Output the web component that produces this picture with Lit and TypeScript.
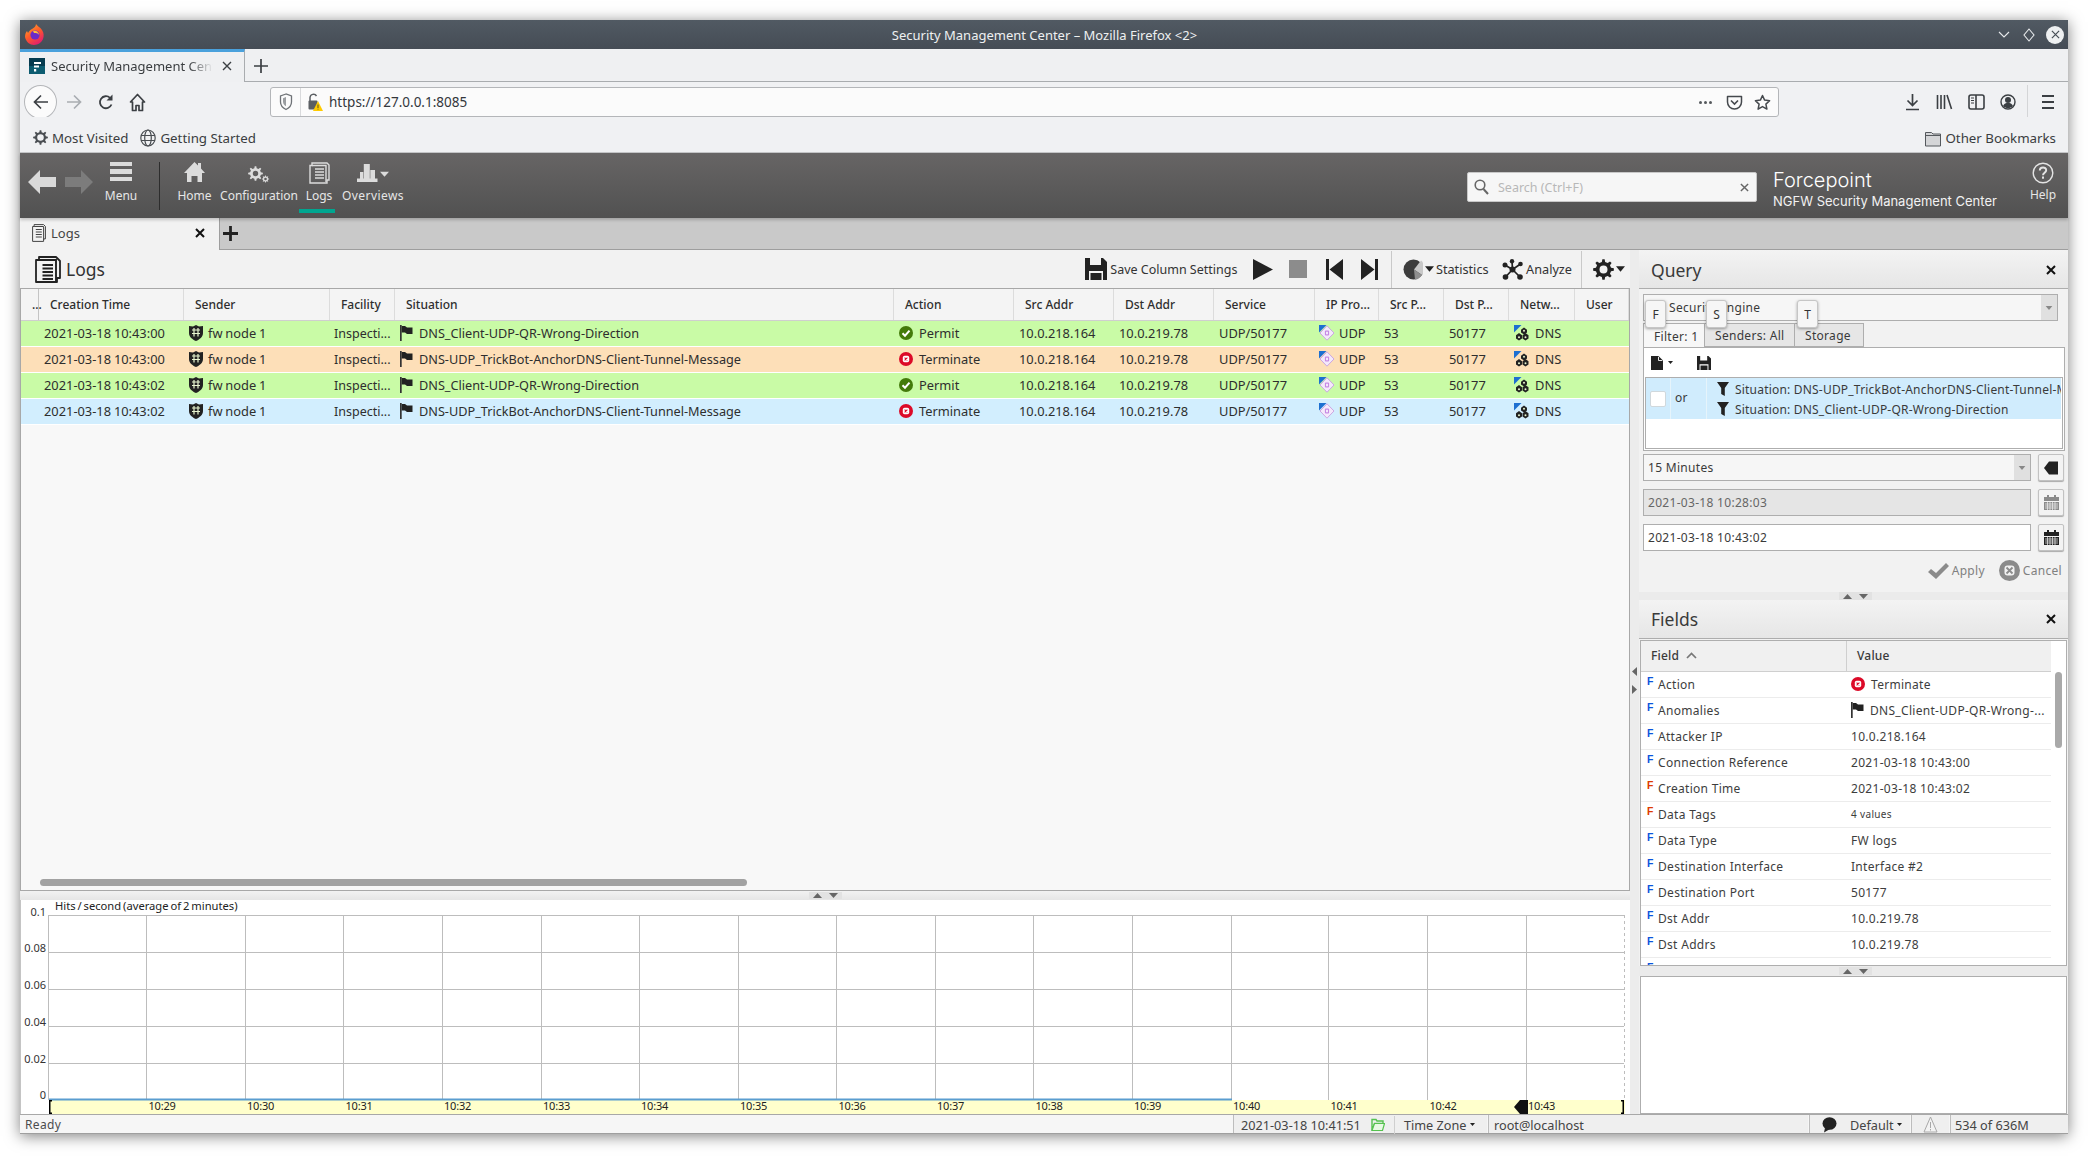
import { LitElement, html, css, svg } from "lit";
import { customElement } from "lit/decorators.js";

const gear = (cx: number, cy: number, r: number, n: number, hole: number) => {
  const pts: string[] = [];
  for (let i = 0; i < n; i++) {
    const a = (i * 2 * Math.PI) / n;
    const d = Math.PI / n;
    [[-0.55, r * 0.74], [-0.28, r], [0.28, r], [0.55, r * 0.74]].forEach(([k, rr]) => {
      const t = a + k * d * 1.0;
      pts.push(`${(cx + rr * Math.cos(t)).toFixed(2)} ${(cy + rr * Math.sin(t)).toFixed(2)}`);
    });
  }
  const h = `M${cx - hole} ${cy}a${hole} ${hole} 0 1 0 ${2 * hole} 0a${hole} ${hole} 0 1 0 ${-2 * hole} 0z`;
  return `M${pts.join("L")}z${h}`;
};

const ic = {
  firefox: html`<svg width="19" height="21" viewBox="0 0 19 21"><defs><linearGradient id="ff" x1="0" y1="0" x2="0.6" y2="1"><stop offset="0" stop-color="#ffb02e"/><stop offset=".55" stop-color="#ff5a2a"/><stop offset="1" stop-color="#e3206a"/></linearGradient></defs><path d="M11 0c1 2 4 3 6 6 2 3 2 6 1 9-1 3-5 6-9 6-4 0-8-3-9-8C0 10 1 8 2 7l1 2c1-2 2-3 4-4 2-1 4-3 4-5z" fill="url(#ff)"/><circle cx="10" cy="11" r="4.6" fill="#6a2bc9"/><path d="M8 7c3-1 6 1 6 4-1-2-3-2-5-2z" fill="#ffbd3a"/></svg>`,
  favicon: html`<svg width="16" height="16" viewBox="0 0 16 16"><rect width="16" height="16" fill="#063b4f"/><rect x="0" y="8" width="16" height="8" fill="#0d5c70"/><path d="M5 4h7v2H5zM5 7.5h5v2H5zM5 11h2.2v2.5H5z" fill="#fff"/></svg>`,
  back: html`<svg width="18" height="18" viewBox="0 0 18 18"><path d="M16 9H3M9 2.5 2.5 9 9 15.500" fill="none" stroke="#3b3f43" stroke-width="1.700"/></svg>`,
  fwd: html`<svg width="18" height="18" viewBox="0 0 18 18"><path d="M2 9h13M9 2.500 15.500 9 9 15.500" fill="none" stroke="#a9adb1" stroke-width="1.700"/></svg>`,
  reload: html`<svg width="16" height="18" viewBox="0 0 16 18"><path d="M13.500 11.500A6 6 0 1 1 12 4.800" fill="none" stroke="#3b3f43" stroke-width="1.800"/><path d="M14.500 1.500v6h-6z" fill="#3b3f43"/></svg>`,
  home: html`<svg width="17" height="19" viewBox="0 0 17 19"><path d="M8.500 1.500 1.500 9h2v8.500h3.500v-5h3v5h3.500V9h2z" fill="none" stroke="#3b3f43" stroke-width="1.700" stroke-linejoin="round"/></svg>`,
  shieldFf: html`<svg width="14" height="18" viewBox="0 0 14 18"><path d="M7 1 1.500 3v6c0 3.500 2.500 6 5.500 7.500 3-1.500 5.500-4 5.500-7.500V3z" fill="none" stroke="#6f7377" stroke-width="1.300"/><path d="M7 4 4 5.200v3.500C4 11 5.500 12.500 7 13.300z" fill="#9a9da0"/></svg>`,
  lock: html`<svg width="15" height="20" viewBox="0 0 15 20"><path d="M2 9V5.500a3.500 3.500 0 0 1 6.500-1.500" fill="none" stroke="#5b5f63" stroke-width="1.500"/><rect x="0.500" y="8.500" width="9" height="9" rx="1" fill="#5b5f63"/><path d="M10 9l5 10H5z" fill="#ffcb00"/><path d="M9.600 12.500h.8v3.500h-.8zM9.600 16.800h.8v.8h-.8z" fill="#333"/></svg>`,
  pocket: html`<svg width="17" height="17" viewBox="0 0 17 17"><path d="M1.500 2.500h14v5.500a7 7 0 0 1-14 0z" fill="none" stroke="#45494d" stroke-width="1.500" stroke-linejoin="round"/><path d="M5 6.500l3.500 3.500L12 6.500" fill="none" stroke="#45494d" stroke-width="1.600"/></svg>`,
  star: html`<svg width="17" height="17" viewBox="0 0 17 17"><path d="M8.500 1.500l2.100 4.600 5 .6-3.700 3.400 1 5-4.400-2.500-4.400 2.500 1-5L1.400 6.700l5-.6z" fill="none" stroke="#45494d" stroke-width="1.500" stroke-linejoin="round"/></svg>`,
  download: html`<svg width="15" height="18" viewBox="0 0 15 18"><path d="M7.500 1v11M2.500 7.500l5 5 5-5M1 16.500h13" fill="none" stroke="#3b3f43" stroke-width="1.700"/></svg>`,
  library: html`<svg width="17" height="16" viewBox="0 0 17 16"><path d="M1.500 1v14M5 1v14M8.500 1v14M11 1l4.500 14" fill="none" stroke="#3b3f43" stroke-width="1.600"/></svg>`,
  sidebar: html`<svg width="17" height="16" viewBox="0 0 17 16"><rect x="1" y="1" width="15" height="14" rx="2" fill="none" stroke="#3b3f43" stroke-width="1.600"/><path d="M8 1v14" stroke="#3b3f43" stroke-width="1.600"/><path d="M3 4h3M3 6.500h3M3 9h3" stroke="#3b3f43" stroke-width="1.200"/></svg>`,
  account: html`<svg width="16" height="18" viewBox="0 0 16 18"><circle cx="8" cy="9" r="7" fill="none" stroke="#3b3f43" stroke-width="1.400"/><circle cx="8" cy="7" r="3" fill="#3b3f43"/><path d="M3 13c1-2.500 3-3 5-3s4 .5 5 3c-1.500 1.500-3 2-5 2s-3.500-.5-5-2z" fill="#3b3f43"/></svg>`,
  menuFf: html`<svg width="14" height="16" viewBox="0 0 14 16"><path d="M1 2h12M1 8h12M1 14h12" stroke="#3b3f43" stroke-width="1.800"/></svg>`,
  mostVisited: html`<svg width="15" height="15" viewBox="0 0 15 15"><path fill="#4a4e52" fill-rule="evenodd" d="${gear(7.5, 7.5, 7.4, 8, 3.3)}"/></svg>`,
  globe: html`<svg width="16" height="18" viewBox="0 0 16 18"><g fill="none" stroke="#4a4e52" stroke-width="1.200"><ellipse cx="8" cy="9" rx="7.200" ry="8"/><ellipse cx="8" cy="9" rx="3.300" ry="8"/><path d="M1 6.500h14M1 11.500h14"/></g></svg>`,
  folderFf: html`<svg width="16" height="18" viewBox="0 0 16 18"><path d="M.500 3.500h6l1.500 1.500h7.500v12H.500z" fill="#d4d5d7" stroke="#55595d"/><path d="M.500 6.500h15" stroke="#55595d"/></svg>`,
  arrowL: (c: string) => html`<svg width="28" height="24" viewBox="0 0 28 24"><path d="M0 12 12 0v7h16v10H12v7z" fill="${c}"/></svg>`,
  arrowR: (c: string) => html`<svg width="28" height="24" viewBox="0 0 28 24"><path d="M28 12 16 0v7H0v10h16v7z" fill="${c}"/></svg>`,
  burger: html`<svg width="22" height="19" viewBox="0 0 22 19"><path d="M0 0h22v4H0zM0 7h22v5H0zM0 15h22v4H0z" fill="#dcdcdc"/></svg>`,
  homeApp: html`<svg width="21" height="20" viewBox="0 0 21 20"><path d="M10.500 0 14 3.500V1h3v5.500l4 4.500h-3v9h-4.500v-6h-6v6H3v-9H0z" fill="#dcdcdc"/></svg>`,
  config: html`<svg width="22" height="17" viewBox="0 0 22 17" style="margin-top:4px"><path fill="#dcdcdc" fill-rule="evenodd" d="${gear(7.5, 7.5, 7.4, 8, 2.7)}"/><path fill="#dcdcdc" fill-rule="evenodd" d="${gear(17.5, 13, 3.6, 8, 1.300)}"/></svg>`,
  logsLight: html`<svg width="21" height="22" viewBox="0 0 21 22"><path d="M1 3.500h2V1h15l2 2v15h-2v3H1z" fill="none" stroke="#dcdcdc" stroke-width="1.400"/><path d="M3 3.500h14V20M6 7h9M6 10h9M6 13h9M6 16h9" fill="none" stroke="#dcdcdc" stroke-width="1.400"/></svg>`,
  overviews: html`<svg width="32" height="18" viewBox="0 0 32 18" style="margin-top:2px"><path d="M0 14.500h20.500V18H0zM3 8h3.300v7H3zM6.800 0h6v15h-6zM13.300 6h4.700v9h-4.700z" fill="#dcdcdc"/><path d="M23 7.700h9l-4.500 5z" fill="#dcdcdc"/></svg>`,
  search: html`<svg width="15" height="16" viewBox="0 0 15 16"><circle cx="6" cy="6" r="4.800" fill="none" stroke="#666" stroke-width="1.600"/><path d="M9.500 10l4.500 5" stroke="#666" stroke-width="2"/></svg>`,
  x: (s: number, c: string, w = 2) => html`<svg width="${s}" height="${s}" viewBox="0 0 10 10"><path d="M1 1l8 8M9 1l-8 8" stroke="${c}" stroke-width="${w}" fill="none"/></svg>`,
  plus: (s: number, c: string, w: number) => html`<svg width="${s}" height="${s}" viewBox="0 0 14 14"><path d="M7 0v14M0 7h14" stroke="${c}" stroke-width="${w}"/></svg>`,
  help: html`<svg width="22" height="22" viewBox="0 0 22 22"><circle cx="11" cy="11" r="9.800" fill="none" stroke="#e4e4e4" stroke-width="1.400"/><path d="M7.800 8.500c0-4 6.400-4 6.400-.3 0 2.500-3.200 2.500-3.200 5" fill="none" stroke="#e4e4e4" stroke-width="1.900"/><rect x="10" y="14.500" width="2" height="2.200" fill="#e4e4e4"/></svg>`,
  logsDark: (s: number, h: number) => html`<svg width="${s}" height="${h}" viewBox="0 0 26 27"><path d="M1 4h3V1h17l4 4v17h-3v4H1z" fill="none" stroke="#222" stroke-width="1.800" stroke-linejoin="round"/><path d="M4 4h17v22M7.500 9H18M7.500 12.500H18M7.500 16H18M7.500 19.500H18M7.500 23H18" fill="none" stroke="#222" stroke-width="1.900"/></svg>`,
  logsTab: html`<svg width="14" height="18" viewBox="0 0 14 18"><path d="M.600 2.500h1.500V.600h9.500l1.800 1.800v12.500h-1.800v2.500H.600z" fill="none" stroke="#444" stroke-width="1"/><path d="M2.100 2.500h9.500v13M3.800 5.500h6M3.800 8h6M3.800 10.500h6M3.800 13h6" fill="none" stroke="#444" stroke-width="1"/></svg>`,
  save: (w: number, h: number) => html`<svg width="${w}" height="${h}" viewBox="0 0 22 22"><path fill="#222" fill-rule="evenodd" d="M0 0h18l4 4v18H18V13H4v9H0zM5 0v7h11V0zM5.500 15h11v7h-11z"/></svg>`,
  play: html`<svg width="20" height="21" viewBox="0 0 20 21"><path d="M0 0l20 10.500L0 21z" fill="#222"/></svg>`,
  first: html`<svg width="17" height="21" viewBox="0 0 17 21"><path d="M0 0h3v21H0zM17 0v21L3.500 10.500z" fill="#222"/></svg>`,
  last: html`<svg width="17" height="21" viewBox="0 0 17 21"><path d="M17 0h-3v21h3zM0 0v21l13.500-10.500z" fill="#222"/></svg>`,
  stats: html`<svg width="20" height="21" viewBox="0 0 20 21"><circle cx="10.500" cy="10.500" r="10" fill="#3c3c3c"/><path d="M11 10.500 18 1.500A10 10 0 0 1 19 16z" fill="#c8c8c8"/><path d="M11 10.500 19 16a10 10 0 0 1-7 4.800z" fill="#8f8f8f"/></svg>`,
  tri: (w: number, h: number, c = "#222") => html`<svg width="${w}" height="${h}" viewBox="0 0 10 6"><path d="M0 0h10L5 6z" fill="${c}"/></svg>`,
  analyze: html`<svg width="21" height="21" viewBox="0 0 21 21"><path d="M10.500 10.500 3 6M10.500 10.500 18.500 5M10.500 10.500 3.500 18M10.500 10.500 18 18M10.500 10.500 10 2" stroke="#222" stroke-width="1.700"/><circle cx="10" cy="2.200" r="2.200" fill="#222"/><circle cx="3" cy="6" r="2.500" fill="#222"/><circle cx="18.500" cy="5" r="2.300" fill="#222"/><circle cx="10.500" cy="10.500" r="3" fill="#222"/><circle cx="3.500" cy="18" r="2.800" fill="#222"/><circle cx="18" cy="18" r="2.800" fill="#222"/></svg>`,
  gearDark: html`<svg width="21" height="21" viewBox="0 0 21 21"><path fill="#222" fill-rule="evenodd" d="${gear(10.5, 10.5, 10.4, 8, 4)}"/></svg>`,
  fwshield: html`<svg width="14" height="16" viewBox="0 0 14 16"><path d="M7 0 10 1.500 14 1v7c0 4-3.500 6.500-7 8-3.500-1.500-7-4-7-8V1l4 .5z" fill="#222"/><path d="M3 5h8M3 8.500h8M5 3v8.500M9 3v8.500" stroke="#e8f5d0" stroke-width="1.200"/></svg>`,
  flag: html`<svg width="13" height="16" viewBox="0 0 13 16"><path d="M0 0h1.700v16H0z" fill="#333"/><path d="M1.700 1h3.300l2 1.500h5.500v6.500H7L5 7.500H1.700z" fill="#222"/></svg>`,
  ok: html`<svg width="14" height="14" viewBox="0 0 14 14"><circle cx="7" cy="7" r="7" fill="#437a0a"/><path d="M3.500 7.200l2.500 2.500 4.500-5" fill="none" stroke="#fff" stroke-width="2"/></svg>`,
  term: html`<svg width="14" height="14" viewBox="0 0 14 14"><circle cx="7" cy="7" r="7" fill="#dc0a28"/><rect x="3.800" y="3.800" width="6.400" height="6.400" rx="1.800" fill="#fff"/><path d="M5.600 5.600l2.800 2.800M8.400 5.600l-2.800 2.800" stroke="#dc0a28" stroke-width="1.100"/></svg>`,
  proto: html`<svg width="16" height="16" viewBox="0 0 16 16"><path d="M8 .800 15 8l-7 7.200L1 8z" fill="#f4e9fb" stroke="#cba6e2" stroke-width="1"/><rect x="5.900" y="5.500" width="4.200" height="5" rx="1" fill="#c78ae4"/><path d="M7 6.800h2v2.400H7z" fill="#f4e9fb"/><path d="M0 0h7.500L0 7.500z" fill="#1d6fd1"/></svg>`,
  net: html`<svg width="16" height="16" viewBox="0 0 16 16"><path d="M0 0h7.500L0 7.500z" fill="#1d6fd1"/><g fill="#222"><path d="M10 2.500l3 2.200v2.800l-3 2-3-2V4.700z"/><path d="M5 8l3 2.200v3.300L5 15.500l-3-2v-3.300z"/><path d="M11.500 8l3 2.200v3.300l-3 2-3-2v-3.300z"/></g><g fill="#e8f5d0"><circle cx="10" cy="5.800" r="1"/><circle cx="5" cy="12.200" r="1"/><circle cx="11.500" cy="12.200" r="1"/></g></svg>`,
  newFile: html`<svg width="12" height="14" viewBox="0 0 12 14"><path d="M0 0h7.500l4.500 4.500V14H0z" fill="#222"/><path d="M7.500 .8v3.700h3.700" fill="none" stroke="#fff" stroke-width=".9"/></svg>`,
  funnel: html`<svg width="12" height="14" viewBox="0 0 12 14"><path d="M0 0h12L7.800 6v8L4.200 12V6z" fill="#222"/></svg>`,
  leftArr: html`<svg width="14" height="14" viewBox="0 0 14 14"><path d="M0 7l5-6.500h9v13H5z" fill="#222"/></svg>`,
  cal: (c: string) => html`<svg width="15" height="15" viewBox="0 0 15 15"><path d="M0 2h3V0h2v2h5V0h2v2h3v4H0z" fill="${c}"/><path fill="${c}" d="M0 7h15v8H0z"/><path d="M1 9h13M1 11h13M1 13h13M3.500 7v8M6 7v8M8.500 7v8M11 7v8" stroke="#f0f0f0" stroke-width=".7"/></svg>`,
  check: html`<svg width="21" height="16" viewBox="0 0 21 16"><path d="M0 9l3-3 5 4L18 0l3 3L8 16z" fill="#8b8b8b"/></svg>`,
  cancel: html`<svg width="21" height="21" viewBox="0 0 21 21"><circle cx="10.500" cy="10.500" r="10.500" fill="#8b8b8b"/><rect x="5.500" y="5.500" width="10" height="10" rx="3" fill="#f2f2f2"/><path d="M7.500 7.500l6 6M13.500 7.500l-6 6" stroke="#8b8b8b" stroke-width="1.800"/></svg>`,
  folderGreen: html`<svg width="14" height="14" viewBox="0 0 14 14"><path d="M1 3V1.500h4l1 1.500h6v2.500H3.500L1 12.500z" fill="none" stroke="#55c24f" stroke-width="1.400"/><path d="M3.500 5.500H13.500l-2 7H1z" fill="#e8f9e4" stroke="#55c24f" stroke-width="1.200"/></svg>`,
  bubble: html`<svg width="15" height="16" viewBox="0 0 15 16"><ellipse cx="7.500" cy="6.500" rx="7" ry="6.300" fill="#222"/><path d="M3 11l-1 4.500L8 12z" fill="#222"/></svg>`,
  warn: html`<svg width="15" height="17" viewBox="0 0 15 17"><path d="M7.500 1 14 16H1z" fill="#f3f3f3" stroke="#a8a8a8"/><path d="M7 6h1v6H7zM7 13h1v1.500H7z" fill="#a8a8a8"/></svg>`,
  up: html`<svg width="9" height="5" viewBox="0 0 9 5"><path d="M0 5 4.500 0 9 5z" fill="#666"/></svg>`,
  down: html`<svg width="9" height="5" viewBox="0 0 9 5"><path d="M0 0h9L4.500 5z" fill="#666"/></svg>`,
  chevUp: html`<svg width="11" height="7" viewBox="0 0 11 7"><path d="M1 6l4.500-4.500L10 6" fill="none" stroke="#777" stroke-width="1.700"/></svg>`,
};

const HEAD = ["...", "Creation Time", "Sender", "Facility", "Situation", "Action", "Src Addr", "Dst Addr", "Service", "IP Pro...", "Src P...", "Dst P...", "Netw...", "User"];
const ROWS = [
  { t: "2021-03-18 10:43:00", s: "DNS_Client-UDP-QR-Wrong-Direction", a: "Permit", c: "g" },
  { t: "2021-03-18 10:43:00", s: "DNS-UDP_TrickBot-AnchorDNS-Client-Tunnel-Message", a: "Terminate", c: "o" },
  { t: "2021-03-18 10:43:02", s: "DNS_Client-UDP-QR-Wrong-Direction", a: "Permit", c: "g" },
  { t: "2021-03-18 10:43:02", s: "DNS-UDP_TrickBot-AnchorDNS-Client-Tunnel-Message", a: "Terminate", c: "b" },
];
const FIELDS: [string, string, string, any?, string?][] = [
  ["Action", "b", "Terminate", ic.term],
  ["Anomalies", "b", "DNS_Client-UDP-QR-Wrong-...", ic.flag],
  ["Attacker IP", "b", "10.0.218.164"],
  ["Connection Reference", "b", "2021-03-18 10:43:00"],
  ["Creation Time", "r", "2021-03-18 10:43:02"],
  ["Data Tags", "r", "4 values", undefined, "small"],
  ["Data Type", "b", "FW logs"],
  ["Destination Interface", "b", "Interface #2"],
  ["Destination Port", "b", "50177"],
  ["Dst Addr", "b", "10.0.219.78"],
  ["Dst Addrs", "b", "10.0.219.78"],
  ["", "b", ""],
];

const VX = [125.5, 224, 322.5, 421, 520, 618, 717, 815.5, 914, 1012.5, 1111, 1210, 1307.5, 1406.5, 1505];
const LABELS = ["10:29", "10:30", "10:31", "10:32", "10:33", "10:34", "10:35", "10:36", "10:37", "10:38", "10:39", "10:40", "10:41", "10:42", "10:43"];
const HY: [number, string][] = [[15, "0.1"], [52, "0.08"], [89, "0.06"], [126, "0.04"], [163, "0.02"]];

@customElement("app-root")
export class AppRoot extends LitElement {
  static styles = css`
    :host { display: block; width: 2088px; height: 1156px; box-sizing: border-box; padding: 20px; background: #fff; overflow: hidden;
      font-family: "Noto Sans", sans-serif; font-size: 12px; color: #333; }
    * { box-sizing: border-box; }
    svg { display: block; flex: none; }
    .win { width: 2048px; height: 1114px; display: flex; flex-direction: column; box-shadow: 0 2px 14px rgba(0,0,0,.5); background: #f2f2f2; }

    .title { height: 29px; flex: none; background: linear-gradient(#515a63, #454c55); display: flex; align-items: center; position: relative; padding: 0 4px 0 5px; color: #eef0f1; font-size: 13px; }
    .title .name { position: absolute; left: 0; right: 0; text-align: center; padding-left: 1px; }
    .title .wb { margin-left: auto; display: flex; align-items: center; gap: 11px; position: relative; }
    .closeb { width: 18px; height: 18px; border-radius: 50%; background: #eef0f1; display: flex; align-items: center; justify-content: center; }

    .tabs { height: 33px; flex: none; background: #eff0f2; border-bottom: 1px solid #a9acaf; display: flex; align-items: stretch; }
    .ftab { width: 225px; border-top: 3px solid #4aa1dc; border-right: 1px solid #a9acaf; background: #eff0f2; margin-bottom: -1px; display: flex; align-items: center; padding: 0 0 3px 9px; font-size: 13px; color: #3a3d40; position: relative; }
    .ftab .t { margin-left: 6px; width: 162px; white-space: nowrap; overflow: hidden; -webkit-mask-image: linear-gradient(90deg, #000 85%, transparent); mask-image: linear-gradient(90deg, #000 85%, transparent); }
    .ftab .xx { margin-left: 9px; }
    .ftnew { margin: 10px 0 0 9px; }

    .nav { height: 35px; flex: none; background: #f0f1f3; display: flex; align-items: center; padding: 5px 0 0 4px; }
    .bk { width: 33px; height: 34px; border-radius: 50%; border: 1px solid #b4b6b9; background: #fbfbfb; display: flex; align-items: center; justify-content: center; flex: none; margin-top: -1px; }
    .navb { width: 32px; display: flex; justify-content: center; flex: none; }
    .urlbox { width: 1509px; height: 30px; margin-left: 117px; border: 1px solid #b4b6b9; border-radius: 3px; background: #fbfbfb; display: flex; align-items: center; padding: 0 7px 0 8px; font-size: 13.5px; color: #33373b; }
    .urlbox .sep { width: 1px; height: 28px; background: #d9dadc; margin: 0 7px 0 7px; }
    .urlbox .u { margin-left: 6px; }
    .urlbox .end { margin-left: auto; display: flex; align-items: center; gap: 11px; }
    .dots { display: flex; gap: 2px; margin-right: 3px; }
    .dots i { width: 3px; height: 3px; border-radius: 50%; background: #55595d; }
    .tools { margin-left: 117px; display: flex; align-items: center; }
    .tools .navb { width: 32px; }
    .vsep { width: 1px; height: 34px; background: #d4d5d7; margin: 0 13px 0 3px; }

    .bm { height: 36px; flex: none; background: #f0f1f3; display: flex; align-items: center; padding: 6px 12px 0 13px; font-size: 13.3px; color: #3a3d40; border-bottom: 1px solid #c5c6c8; }
    .bm .it { display: flex; align-items: center; gap: 4px; }
    .bm .it + .it { margin-left: 12px; }
    .bm .it.end { margin-left: auto; }

    .head { height: 65px; flex: none; background: linear-gradient(#676565, #515151); display: flex; align-items: flex-start; color: #e6e6e6; position: relative; box-shadow: 0 2px 3px rgba(0,0,0,.2); z-index: 2; }
    .navbtn { display: flex; flex-direction: column; align-items: center; height: 65px; padding-top: 9px; font-size: 12px; flex: none; line-height: 16px; }
    .navbtn .ico { height: 24px; display: flex; align-items: flex-start; }
    .navbtn .lb { margin-top: 2px; white-space: nowrap; }
    .navbtn .lb.ov { letter-spacing: .45px; }
    .arrows { display: flex; gap: 9px; padding: 17px 0 0 8px; flex: none; width: 63px; }
    .hsep { width: 1px; height: 48px; background: #2d2d2d; margin: 9px 18px 0 0; flex: none; }
    .ul { position: absolute; left: 279px; bottom: 5px; width: 36px; height: 4px; background: #00a690; }
    .hsearch { position: absolute; left: 1447px; top: 19px; width: 290px; height: 30px; background: #f6f6f6; border: 1px solid #c8c8c8; border-radius: 2px; display: flex; align-items: center; padding: 0 7px 0 6px; color: #b8b8b8; font-size: 12.5px; gap: 9px; }
    .hsearch .xx { margin-left: auto; }
    .brand { position: absolute; left: 1753px; top: 15px; line-height: 1; color: #fff; }
    .brand .fp { font-family: Inter, "Noto Sans", sans-serif; font-size: 20px; line-height: 24px; font-weight: 300; }
    .brand .sub { font-family: Inter, "Noto Sans", sans-serif; font-size: 13px; line-height: 16px; margin-top: 1px; color: #f2f2f2; }
    .help { position: absolute; left: 2008px; top: 9px; width: 30px; display: flex; flex-direction: column; align-items: center; font-size: 12px; gap: 3px; line-height: 15px; }

    .subtabs { height: 32px; flex: none; background: #c9c9c9; display: flex; border-bottom: 1px solid #9e9e9e; }
    .stab { width: 200px; background: #f2f2f2; margin-bottom: -1px; display: flex; align-items: center; padding: 0 0 3px 12px; font-size: 13px; color: #444; border-right: 1px solid #9e9e9e; }
    .stab .t { margin-left: 5px; }
    .stab .xx { margin-left: auto; margin-right: 14px; }
    .subtabs .np { margin: 8px 0 0 3px; }

    .main { flex: 1; min-height: 0; display: flex; background: #ececec; }
    .left { width: 1610px; flex: none; display: flex; flex-direction: column; }
    .tb { height: 39px; flex: none; background: #f2f2f2; display: flex; align-items: center; padding: 0 5px 0 15px; border-bottom: 1px solid #a8a8a8; }
    .tb .nm { font-size: 17.500px; margin-left: 5px; color: #333; }
    .tb .sp { margin-left: auto; }
    .tb .lab { font-size: 12.7px; color: #333; }
    .tb .lab.sv { font-size: 12.5px; }
    .row { display: flex; align-items: center; }
    .tsep { width: 1px; height: 37px; background: #c9c9c9; }

    .grid { flex: 1; min-height: 0; position: relative; background: #f8f8f8; border-left: 1px solid #a8a8a8; border-right: 1px solid #a8a8a8; border-bottom: 1px solid #a8a8a8; }
    .hdr, .tr { display: grid; grid-template-columns: 18px 145px 146px 65px 499px 120px 100px 100px 101px 64px 65px 65px 66px 1fr; }
    .hdr { height: 32px; background: #f4f4f4; border-bottom: 1px solid #cfcfcf; }
    .hc { display: flex; align-items: center; padding: 0 0 0 11px; font-weight: 500; border-right: 1px solid #dcdcdc; white-space: nowrap; color: #2e2e2e; }
    .hc.f { border-right: 1px solid #c4c4c4; }
    .tr { height: 26px; border-bottom: 1px solid #fff; }
    .tr.g { background: #c9fba6; }
    .tr.o { background: #fddfb8; }
    .tr.b { background: #d2eefe; }
    .td { display: flex; align-items: center; gap: 5px; padding: 0 0 1px 5px; white-space: nowrap; overflow: hidden; color: #2e2e2e; font-size: 12.85px; }
    .td.tm { word-spacing: -.5px; }
    .td.sn { word-spacing: -.5px; }
    .td.fac { font-size: 12.5px; padding-left: 4px; }
    .td.pr { padding-left: 4px; gap: 4px; }
    .td.sit { font-size: 12.7px; gap: 6px; }
    .td.act { gap: 6px; }
    .hbar { position: absolute; left: 19px; bottom: 4px; width: 707px; height: 7px; border-radius: 4px; background: #a2a2a2; }
    .split-h { height: 9px; flex: none; background: linear-gradient(#f2f2f2, #e6e6e6); display: flex; justify-content: center; align-items: center; gap: 7px; }
    .split-h .hd { display: flex; gap: 7px; padding: 1px 4px; background: #e2e2e2; }
    .chart { height: 214px; flex: none; background: #fff; border-left: 1px solid #c4c4c4; }
    .chart svg text { font-family: "Noto Sans", sans-serif; }

    .vsplit { width: 9px; flex: none; background: #ececec; display: flex; flex-direction: column; align-items: center; position: relative; padding-top: 417px; gap: 9px; }
    .vsplit svg { margin-left: -1px; }

    .right { flex: 1; min-width: 0; display: flex; flex-direction: column; background: #f2f2f2; box-shadow: -1px 0 0 #dcdcdc; }
    .ph { height: 39px; flex: none; background: linear-gradient(#f3f3f3, #e6e6e6); border-bottom: 1px solid #adadad; display: flex; align-items: center; justify-content: space-between; padding: 1px 12px 0 12px; font-size: 17.500px; color: #3a3a3a; }
    .ph.f2 { padding-top: 0; }
    .q { height: 303px; flex: none; position: relative; padding: 5px 0 0 4px; font-size: 12px; color: #3a3a3a; letter-spacing: .3px; }
    .sel { height: 27px; border: 1px solid #aeaeae; background: #f6f6f6; display: flex; align-items: center; position: relative; padding-left: 25px; }
    .sel .dd { margin-left: auto; width: 16px; height: 100%; background: #e0e0e0; display: flex; align-items: center; justify-content: center; }
    .s1 { width: 415px; }
    .qtabs { display: flex; margin-top: 2px; height: 24px; align-items: stretch; }
    .qt { padding: 1px 0 0 10px; border: 1px solid #aeaeae; border-left: 0; background: #e6e6e6; display: flex; align-items: center; white-space: nowrap; }
    .qt.a { background: #f7f7f7; border-left: 1px solid #aeaeae; border-bottom: 0; width: 62px; position: relative; }
    .qt.w1 { width: 90px; } .qt.w2 { width: 69px; }
    .fbox { width: 422px; height: 104px; border: 1px solid #aeaeae; background: #fff; padding: 0 1px; display: flex; flex-direction: column; }
    .fbar { height: 29px; flex: none; display: flex; align-items: center; padding: 0 0 0 6px; gap: 5px; }
    .flist { flex: 1; border: 1px solid #aeaeae; margin-bottom: 1px; }
    .frow { height: 41px; background: #d0ecfd; display: flex; margin-right: 1px; }
    .c1 { width: 25px; flex: none; border-right: 1px solid #e6f4fb; display: flex; align-items: center; justify-content: center; }
    .cb { width: 16px; height: 16px; background: #fff; border: 1px solid #d0d8dc; border-radius: 2px; margin-right: 1px; }
    .c2 { width: 36px; flex: none; border-right: 1px solid #e6f4fb; display: flex; align-items: center; padding: 0 0 2px 4px; }
    .c3 { flex: 1; min-width: 0; overflow: hidden; padding: 1px 0 0 10px; white-space: nowrap; }
    .fl { height: 20px; display: flex; align-items: center; gap: 6px; letter-spacing: .2px; }
    .line { display: flex; align-items: center; }
    .s2 { width: 388px; height: 27px; padding-left: 4px; }
    .inp { width: 388px; height: 27px; border: 1px solid #aeaeae; background: #fff; display: flex; align-items: center; padding-left: 4px; }
    .inp.dis { background: #e5e5e5; color: #666; }
    .btn { width: 26px; height: 27px; margin-left: 7px; border: 1px solid #c2c2c2; border-radius: 2px; background: #f3f3f3; box-shadow: 0 1px 1px #aaa; display: flex; align-items: center; justify-content: center; }
    .acts { display: flex; justify-content: flex-end; align-items: center; margin-top: 9px; padding-right: 6px; color: #808080; }
    .acts .a1 { display: flex; align-items: center; gap: 3px; }
    .acts .a1 + .a1 { margin-left: 14px; }
    .tip { position: absolute; top: 11px; width: 21px; height: 28px; background: #f6f6f6; border: 1px solid #c6c6c6; border-radius: 3px; box-shadow: 0 1px 3px rgba(0,0,0,.35); display: flex; align-items: center; justify-content: center; letter-spacing: 0; padding-top: 1px; color: #333; }
    .split-p { height: 8px; flex: none; background: #ebebeb; display: flex; justify-content: center; }
    .split-p .hd { display: flex; align-items: center; gap: 7px; padding: 0 4px; background: #e2e2e2; margin-left: 4px; }
    .ftable { height: 326px; flex: none; margin: 1px 1px 0 1px; border: 1px solid #aeaeae; background: #fff; position: relative; overflow: hidden; }
    .fh { width: 410px; height: 31px; display: grid; grid-template-columns: 206px 1fr; background: #f0f0f0; border-bottom: 1px solid #cfcfcf; font-weight: 500; }
    .fh > div { display: flex; align-items: center; padding-left: 10px; gap: 7px; color: #3a3a3a; padding-bottom: 1px; letter-spacing: .2px; }
    .fh > div:first-child { border-right: 1px solid #cfcfcf; }
    .frw { width: 410px; height: 26px; display: grid; grid-template-columns: 205px 1fr; border-bottom: 1px solid #ececec; color: #3d3d3d; letter-spacing: .3px; position: relative; }
    .fn { display: flex; align-items: center; white-space: nowrap; padding: 0 0 1px 6px; gap: 5px; }
    .ff { width: 6px; font-size: 10.5px; line-height: 10px; font-weight: 900; align-self: flex-start; margin-top: 4px; font-family: "Liberation Sans", sans-serif; }
    .ff.b { color: #0b55dc; }
    .ff.r { color: #dd3a00; }
    .fv { display: flex; align-items: center; gap: 6px; padding: 0 0 1px 5px; white-space: nowrap; }
    .fv.small { font-size: 10px; letter-spacing: .35px; }
    .vbar { position: absolute; right: 4px; top: 31px; width: 7px; height: 76px; background: #a9a9a9; border-radius: 4px; }
    .note { flex: 1; min-height: 0; margin: 0 1px 0 1px; background: #fff; border: 1px solid #aeaeae; }

    .status { height: 20px; flex: none; background: #f6f6f6; border-top: 1px solid #a8a8a8; border-bottom: 1px solid #9f9f9f; display: flex; align-items: stretch; color: #444; position: relative; z-index: 1; }
    .ready { width: 1213px; padding: 1px 0 0 5px; display: flex; align-items: center; letter-spacing: .35px; color: #4c4c4c; }
    .seg { background: #efefef; border-left: 1px solid #bdbdbd; display: flex; align-items: center; white-space: nowrap; font-size: 12.7px; padding-top: 1px; }
    .seg.s1x { width: 254px; padding-left: 7px; }
    .seg.s2x { width: 320px; padding-left: 5px; margin-left: 1px; }
    .seg.s3x { width: 101px; padding-left: 12px; margin-left: 1px; }
    .seg.s4x { width: 38px; justify-content: center; margin-left: 1px; }
    .seg.s5x { flex: 1; padding-left: 4px; margin-left: 1px; }
    .stop { width: 18px; height: 18px; background: #8c8c8c; margin: 0 19px 0 16px; }
  `;

  renderChart() {
    return html`<svg width="1609" height="214" viewBox="0 0 1609 214">
      <g stroke="#bdbdbd" stroke-width="1" shape-rendering="crispEdges">
        <path d="M28 15.500H1603" />
        ${HY.slice(1).map(([y]) => svg`<path d="M28 ${y + 0.5}H1603" />`)}
        <path d="M27.500 15V200" />
        ${VX.map((x) => svg`<path d="M${x} 15V200" />`)}
        <path d="M1603.500 15V200" stroke-dasharray="3 3" />
      </g>
      <text x="34" y="10" font-size="11.200" fill="#222" word-spacing="-1">Hits / second (average of 2 minutes)</text>
      ${HY.map(([y, l]) => svg`<text x="25" y="${y + 1 - 0.5 + (l === "0.1" ? 0 : -1)}" font-size="11" text-anchor="end" fill="#333">${l}</text>`)}
      <text x="25" y="199" font-size="11" text-anchor="end" fill="#333">0</text>
      <rect x="28" y="200" width="1576" height="14" fill="#ffffcc" />
      <rect x="28" y="198.500" width="1183" height="2" fill="#5a9dd0" />
      <path d="M31 200h-3v14h3v-1.500h-1.500v-11H31z" fill="#000" />
      <path d="M1600 200h3v14h-3v-1.500h1.500v-11H1600z" fill="#000" />
      <path d="M1493 207l6-7h8v14h-8z" fill="#111" />
      ${VX.map((x, i) => svg`<text x="${x + 2}" y="210" font-size="11" fill="#222" letter-spacing="-.2">${LABELS[i]}</text>`)}
    </svg>`;
  }

  render() {
    return html`<div class="win">
      <div class="title">
        <div class="name">Security Management Center – Mozilla Firefox &lt;2&gt;</div>
        ${ic.firefox}
        <div class="wb">
          <svg width="12" height="8" viewBox="0 0 12 8"><path d="M1 1l5 5 5-5" fill="none" stroke="#e8eaec" stroke-width="1.100"/></svg>
          <svg width="12" height="14" viewBox="0 0 12 14" style="margin-left:2px"><path d="M6 1l5 6-5 6-5-6z" fill="none" stroke="#e8eaec" stroke-width="1.100"/></svg>
          <div class="closeb">${ic.x(9, "#444c54", 1.3)}</div>
        </div>
      </div>
      <div class="tabs">
        <div class="ftab">${ic.favicon}<span class="t">Security Management Center</span><span class="xx">${ic.x(10, "#3b3f43", 1.4)}</span></div>
        <div class="ftnew">${ic.plus(14, "#3b3f43", 1.7)}</div>
      </div>
      <div class="nav">
        <div class="bk">${ic.back}</div>
        <div class="navb" style="margin-left:1px">${ic.fwd}</div>
        <div class="navb">${ic.reload}</div>
        <div class="navb" style="margin-left:-1px">${ic.home}</div>
        <div class="urlbox">
          ${ic.shieldFf}<span class="sep"></span>${ic.lock}<span class="u">https://127.0.0.1:8085</span>
          <div class="end"><div class="dots"><i></i><i></i><i></i></div>${ic.pocket}${ic.star}</div>
        </div>
        <div class="tools">
          <div class="navb">${ic.download}</div><div class="navb">${ic.library}</div><div class="navb">${ic.sidebar}</div><div class="navb">${ic.account}</div>
          <div class="vsep"></div>${ic.menuFf}
        </div>
      </div>
      <div class="bm">
        <div class="it">${ic.mostVisited}<span>Most Visited</span></div>
        <div class="it">${ic.globe}<span>Getting Started</span></div>
        <div class="it end">${ic.folderFf}<span>Other Bookmarks</span></div>
      </div>
      <div class="head">
        <div class="arrows">${ic.arrowL("#d9d9d9")}${ic.arrowR("#7c7c7c")}</div>
        <div class="navbtn" style="width:76px"><div class="ico">${ic.burger}</div><div class="lb">Menu</div></div>
        <div class="hsep"></div>
        <div class="navbtn" style="width:33px"><div class="ico">${ic.homeApp}</div><div class="lb">Home</div></div>
        <div class="navbtn" style="width:78px;margin-left:9px"><div class="ico">${ic.config}</div><div class="lb">Configuration</div></div>
        <div class="navbtn" style="width:28px;margin-left:7px"><div class="ico">${ic.logsLight}</div><div class="lb">Logs</div></div>
        <div class="navbtn" style="width:64px;margin-left:8px"><div class="ico">${ic.overviews}</div><div class="lb ov">Overviews</div></div>
        <div class="ul"></div>
        <div class="hsearch">${ic.search}<span>Search (Ctrl+F)</span><span class="xx">${ic.x(9, "#666", 1.6)}</span></div>
        <div class="brand"><div class="fp">Forcepoint</div><div class="sub">NGFW Security Management Center</div></div>
        <div class="help">${ic.help}<span>Help</span></div>
      </div>
      <div class="subtabs">
        <div class="stab">${ic.logsTab}<span class="t">Logs</span><span class="xx">${ic.x(10, "#111", 2)}</span></div>
        <div class="np">${ic.plus(15, "#222", 2.6)}</div>
      </div>
      <div class="main">
        <div class="left">
          <div class="tb">
            ${ic.logsDark(26, 27)}<span class="nm">Logs</span>
            <div class="row sp" style="gap:0">
              ${ic.save(22, 22)}<span class="lab sv" style="margin:0 16px 0 3px">Save Column Settings</span>
              ${ic.play}
              <div class="stop"></div>
              ${ic.first}<div style="width:18px"></div>${ic.last}
              <div class="tsep" style="margin:0 11px 0 12.5px"></div>
              ${ic.stats}<span style="margin:0 2px 0 2px">${ic.tri(9, 6)}</span><span class="lab" style="margin-right:13.5px">Statistics</span>
              ${ic.analyze}<span class="lab" style="margin:0 9px 0 3px">Analyze</span>
              <div class="tsep" style="margin-right:11px"></div>
              ${ic.gearDark}<span style="margin-left:2px">${ic.tri(9, 6)}</span>
            </div>
          </div>
          <div class="grid">
            <div class="hdr">${HEAD.map((h, i) => html`<div class="hc ${i === 0 ? "f" : ""}">${h}</div>`)}</div>
            ${ROWS.map((r) => html`<div class="tr ${r.c}">
              <div class="td"></div>
              <div class="td tm">${r.t}</div>
              <div class="td sn">${ic.fwshield}fw node 1</div>
              <div class="td fac">Inspecti...</div>
              <div class="td sit">${ic.flag}${r.s}</div>
              <div class="td act">${r.a === "Permit" ? ic.ok : ic.term}${r.a}</div>
              <div class="td">10.0.218.164</div>
              <div class="td">10.0.219.78</div>
              <div class="td">UDP/50177</div>
              <div class="td pr">${ic.proto}UDP</div>
              <div class="td">53</div>
              <div class="td">50177</div>
              <div class="td">${ic.net}DNS</div>
              <div class="td"></div>
            </div>`)}
            <div class="hbar"></div>
          </div>
          <div class="split-h"><div class="hd">${ic.up}${ic.down}</div></div>
          <div class="chart">${this.renderChart()}</div>
        </div>
        <div class="vsplit">
          <svg width="5" height="9" viewBox="0 0 5 9"><path d="M5 0v9L0 4.500z" fill="#666"/></svg>
          <svg width="5" height="9" viewBox="0 0 5 9"><path d="M0 0v9l5-4.500z" fill="#666"/></svg>
        </div>
        <div class="right">
          <div class="ph"><span>Query</span>${ic.x(10, "#111", 2)}</div>
          <div class="q">
            <div class="sel s1">Security Engine<div class="dd">${ic.tri(8, 4, "#888")}</div></div>
            <div class="qtabs">
              <div class="qt a">Filter: 1</div>
              <div class="qt w1">Senders: All</div>
              <div class="qt w2">Storage</div>
            </div>
            <div class="fbox">
              <div class="fbar">${ic.newFile}${ic.tri(5, 3)}<span style="width:14px"></span>${ic.save(14, 14)}</div>
              <div class="flist">
                <div class="frow">
                  <div class="c1"><div class="cb"></div></div>
                  <div class="c2">or</div>
                  <div class="c3">
                    <div class="fl">${ic.funnel}Situation: DNS-UDP_TrickBot-AnchorDNS-Client-Tunnel-Message</div>
                    <div class="fl">${ic.funnel}Situation: DNS_Client-UDP-QR-Wrong-Direction</div>
                  </div>
                </div>
              </div>
            </div>
            <div class="line" style="margin-top:3px"><div class="sel s2">15 Minutes<div class="dd">${ic.tri(8, 4, "#888")}</div></div><div class="btn">${ic.leftArr}</div></div>
            <div class="line" style="margin-top:8px"><div class="inp dis">2021-03-18 10:28:03</div><div class="btn">${ic.cal("#8a8a8a")}</div></div>
            <div class="line" style="margin-top:8px"><div class="inp">2021-03-18 10:43:02</div><div class="btn">${ic.cal("#222")}</div></div>
            <div class="acts"><div class="a1">${ic.check}<span>Apply</span></div><div class="a1">${ic.cancel}<span>Cancel</span></div></div>
            <div class="tip" style="left:6px">F</div>
            <div class="tip" style="left:67px">S</div>
            <div class="tip" style="left:158px">T</div>
          </div>
          <div class="split-p"><div class="hd">${ic.up}${ic.down}</div></div>
          <div class="ph f2"><span>Fields</span>${ic.x(10, "#111", 2)}</div>
          <div class="ftable">
            <div class="fh"><div>Field ${ic.chevUp}</div><div>Value</div></div>
            ${FIELDS.map(([n, c, v, i, k]) => html`<div class="frw">
              <div class="fn"><span class="ff ${c}">F</span>${n}</div>
              <div class="fv ${k || ""}">${i || ""}${v}</div>
            </div>`)}
            <div class="vbar"></div>
          </div>
          <div class="split-p" style="height:10px;align-items:center"><div class="hd" style="height:8px">${ic.up}${ic.down}</div></div>
          <div class="note"></div>
        </div>
      </div>
      <div class="status">
        <div class="ready">Ready</div>
        <div class="seg s1x">2021-03-18 10:41:51<span style="margin:0 9px 0 10px">${ic.folderGreen}</span><span style="width:1px;height:18px;background:#cfcfcf;margin-right:9px"></span>Time Zone<span style="margin-left:4px">${ic.tri(5, 3)}</span></div>
        <div class="seg s2x">root@localhost</div>
        <div class="seg s3x">${ic.bubble}<span style="margin-left:13px">Default</span><span style="margin-left:3px">${ic.tri(5, 3)}</span></div>
        <div class="seg s4x">${ic.warn}</div>
        <div class="seg s5x">534 of 636M</div>
      </div>
    </div>`;
  }
}
